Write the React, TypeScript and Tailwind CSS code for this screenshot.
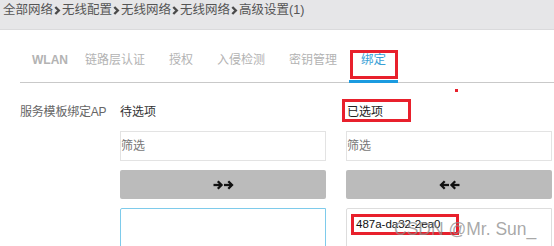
const crumbs = ["全部网络", "无线配置", "无线网络", "无线网络", "高级设置(1)"];

const tabs = [
  { label: "WLAN", w: "w-[53px]" },
  { label: "链路层认证", w: "" },
  { label: "授权", w: "" },
  { label: "入侵检测", w: "" },
  { label: "密钥管理", w: "" },
];

function Chevron() {
  return (
    <svg width="7" height="9" viewBox="0 0 7 9" className="mx-[1px]">
      <path d="M1.3 1 L4.8 4.5 L1.3 8" fill="none" stroke="#4a4a4a" strokeWidth="2.4" />
    </svg>
  );
}

function DoubleArrow({ dir }: { dir: "right" | "left" }) {
  return (
    <svg width="21" height="10" viewBox="0 0 21 10" style={dir === "left" ? { transform: "scaleX(-1)" } : undefined}>
      <g fill="none" stroke="#111" strokeWidth="2.3">
        <path d="M0.5 5 H8" />
        <path d="M4.8 1.3 L8.5 5 L4.8 8.7" />
        <path d="M11 5 H18.5" />
        <path d="M15.3 1.3 L19 5 L15.3 8.7" />
      </g>
    </svg>
  );
}

export default function App() {
  const font = { fontFamily: '"Liberation Sans", "Noto Sans CJK SC", sans-serif' };

  return (
    <div className="relative h-[246px] w-[554px] overflow-hidden bg-white" style={font}>
      {/* breadcrumb */}
      <div className="flex h-[30px] items-start border-b border-[#dadadc] bg-[#e6e6e8] px-[3px]">
        <div className="flex items-center text-[12.5px] leading-[20px] text-[#555]">
          {crumbs.map((c, i) => (
            <div key={i} className="flex items-center">
              {i > 0 && <Chevron />}
              <span>{c}</span>
            </div>
          ))}
        </div>
      </div>

      {/* tabs */}
      <div className="ml-[20px] flex h-[53px] border-b border-[#c9c9c9]">
        {tabs.map((t) => (
          <div
            key={t.label}
            className={`${t.w} px-[12px] pt-[20px] text-center text-[12px] leading-[20px] text-[#b3b3b3] ${t.label === "WLAN" ? "text-[11px] font-bold" : ""}`}
          >
            {t.label}
          </div>
        ))}
        <div className="relative -mb-px border-b-[3px] border-[#1b9be0] px-[12px] pt-[20px] text-[12.5px] leading-[20px] text-[#3a9fd6]">
          绑定
          <div className="absolute left-[1px] right-0 top-[20px] h-[29px] border-[3px] border-[#e8202c]" />
        </div>
      </div>

      <div className="absolute left-[455px] top-[89px] h-[3px] w-[3px] bg-[#e8202c]" />

      {/* content */}
      <div className="flex pl-[20px] pt-[19px]">
        <div className="w-[100px] text-[12px] leading-[20px] tracking-[-0.2px] text-[#666]">服务模板绑定AP</div>
        <div className="flex gap-[20px]">
          <div className="flex w-[206px] flex-col">
            <div className="text-[12px] leading-[20px] text-[#333]">待选项</div>
            <div className="mt-[9px] flex h-[30px] items-center border border-[#e3e3e3] text-[12px] text-[#777]">筛选</div>
            <div className="mt-[9px] flex h-[29px] items-center justify-center rounded-[2px] bg-[#bbbbbb]">
              <DoubleArrow dir="right" />
            </div>
            <div className="mt-[9px] h-[60px] rounded-tl-[2px] border border-[#7ecbeb]" />
          </div>
          <div className="flex w-[206px] flex-col">
            <div className="relative text-[12px] leading-[20px] text-[#222]">
              <span className="pl-[1px]">已选项</span>
              <div className="absolute left-[-4px] top-[-3px] h-[23px] w-[69px] border-[3px] border-[#e8202c]" />
            </div>
            <div className="mt-[9px] flex h-[30px] items-center border border-[#e3e3e3] text-[12px] text-[#777]">筛选</div>
            <div className="mt-[9px] flex h-[29px] items-center justify-center rounded-[2px] bg-[#bbbbbb]">
              <DoubleArrow dir="left" />
            </div>
            <div className="mt-[9px] h-[60px] rounded-tl-[2px] border border-[#dddddd] pl-[9px] pt-[2px]">
              <div className="relative inline-block text-[11.5px] leading-[18px] text-[#111]">
                487a-da32-2ea0
                <div className="absolute left-[-5px] top-[-1px] h-[21px] w-[108px] border-[3px] border-[#e8202c]" />
              </div>
            </div>
          </div>
        </div>
      </div>

      <div className="pointer-events-none absolute left-[394px] top-[218px] text-[17.5px] leading-[22px] text-[#8c8c8c]/75">
        CSDN @Mr. Sun_
      </div>
    </div>
  );
}
